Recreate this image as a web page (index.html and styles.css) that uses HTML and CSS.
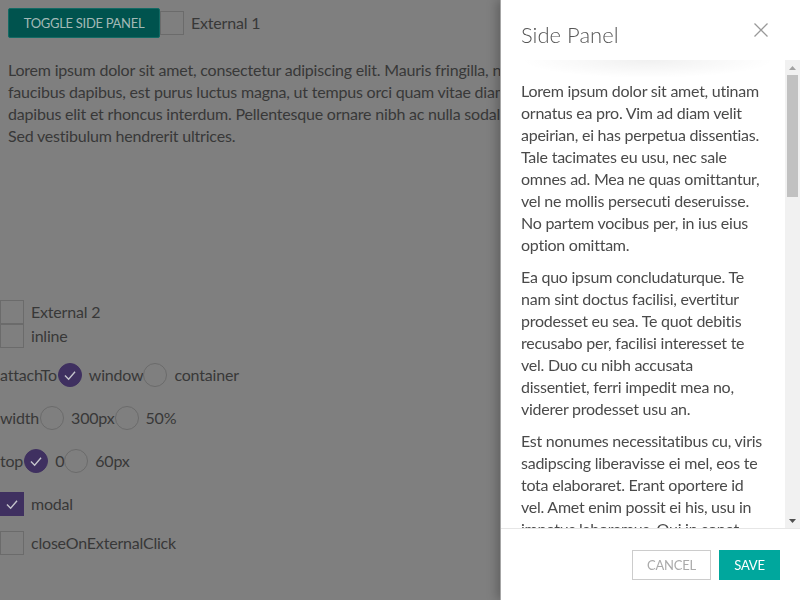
FILE: index.html
```html
<!DOCTYPE html>
<html lang="en">
<head>
<meta charset="utf-8">
<title>Side Panel demo</title>
<link rel="stylesheet" href="styles.css">
</head>
<body>
<div class="page">
  <div class="demo">
    <div class="toolbar">
      <button class="btn-toggle">Toggle Side Panel</button>
      <label class="check"><span class="box"></span><span class="lbl">External 1</span></label>
    </div>
    <p class="intro">Lorem ipsum dolor sit amet, consectetur adipiscing elit. Mauris fringilla, nec ornare tortor<br>faucibus dapibus, est purus luctus magna, ut tempus orci quam vitae diam. Nunc porta<br>dapibus elit et rhoncus interdum. Pellentesque ornare nibh ac nulla sodales, id<br>Sed vestibulum hendrerit ultrices.</p>
  </div>
  <div class="controls">
    <label class="check"><span class="box"></span><span class="lbl">External 2</span></label>
    <label class="check"><span class="box"></span><span class="lbl">inline</span></label>
    <div class="radio-row r-first">
      <span class="name">attachTo</span>
      <label class="radio"><span class="dot on"><svg viewBox="0 0 24 24"><path d="M6.5 12.5 L10.5 16.5 L17.5 8.5"/></svg></span><span class="lbl">window</span></label>
      <label class="radio"><span class="dot"></span><span class="lbl">container</span></label>
    </div>
    <div class="radio-row">
      <span class="name">width</span>
      <label class="radio"><span class="dot"></span><span class="lbl">300px</span></label>
      <label class="radio"><span class="dot"></span><span class="lbl">50%</span></label>
    </div>
    <div class="radio-row">
      <span class="name">top</span>
      <label class="radio"><span class="dot on"><svg viewBox="0 0 24 24"><path d="M6.5 12.5 L10.5 16.5 L17.5 8.5"/></svg></span><span class="lbl">0</span></label>
      <label class="radio"><span class="dot"></span><span class="lbl">60px</span></label>
    </div>
    <label class="check c-modal"><span class="box on"><svg viewBox="0 0 24 24"><path d="M6.5 12.5 L10.5 16.5 L17.5 8.5"/></svg></span><span class="lbl">modal</span></label>
    <label class="check c-last"><span class="box"></span><span class="lbl">closeOnExternalClick</span></label>
  </div>
</div>

<aside class="panel">
  <header class="panel-head">
    <h2 class="panel-title">Side Panel</h2>
    <button class="close" aria-label="Close"><svg viewBox="0 0 14 14"><path d="M0.5 0.5 L13.5 13.5 M13.5 0.5 L0.5 13.5"/></svg></button>
  </header>
  <div class="panel-main">
    <div class="panel-body">
      <p>Lorem ipsum dolor sit amet, utinam ornatus ea pro. Vim ad diam velit apeirian, ei has perpetua dissentias. Tale tacimates eu usu, nec sale omnes ad. Mea ne quas omittantur, vel ne mollis persecuti deseruisse. No partem vocibus per, in ius eius option omittam.</p>
      <p>Ea quo ipsum concludaturque. Te nam sint doctus facilisi, evertitur prodesset eu sea. Te quot debitis recusabo per, facilisi interesset te vel. Duo cu nibh accusata dissentiet, ferri impedit mea no, viderer prodesset usu an.</p>
      <p>Est nonumes necessitatibus cu, viris sadipscing liberavisse ei mel, eos te tota elaboraret. Erant oportere id vel. Amet enim possit ei his, usu in impetus laboramus. Qui in sonet assueverit, sea ad novum scaevola. Quo ut nisl dicam, mel eu iudico nostro.</p>
      <p>Cu eos option constituam, et pro alterum salutatus. Eos id purto utamur accusamus, vis ad dicam tibique. Sea in eirmod definiebas, an elit deterruisset per.</p>
    </div>
    <div class="scrollbar" aria-hidden="true">
      <div class="sb-btn sb-up"><svg viewBox="0 0 7 4"><path d="M0 4 L3.5 0 L7 4 Z"/></svg></div>
      <div class="sb-track"><div class="sb-thumb"></div></div>
      <div class="sb-btn sb-down"><svg viewBox="0 0 7 4"><path d="M0 0 L7 0 L3.5 4 Z"/></svg></div>
    </div>
  </div>
  <footer class="panel-foot">
    <button class="btn-cancel">Cancel</button>
    <button class="btn-save">Save</button>
  </footer>
</aside>
</body>
</html>
```

FILE: styles.css
```css
* { box-sizing: border-box; }

html, body {
  margin: 0;
  height: 100%;
}

body {
  background: #7f7f7f;
  font-family: "Lato", "Liberation Sans", sans-serif;
  font-size: 16px;
  line-height: 22px;
  letter-spacing: -0.2px;
  color: #383838;
  overflow: hidden;
}

.demo {
  height: 300px;
  padding: 8px;
}

.toolbar {
  display: flex;
  align-items: center;
  height: 30px;
}

.btn-toggle {
  height: 30px;
  width: 152px;
  padding: 0;
  border: 1px solid #136a64;
  border-radius: 2px;
  background: #00534e;
  color: #a3b9b6;
  font-family: inherit;
  font-size: 13px;
  letter-spacing: -0.3px;
  text-transform: uppercase;
}

.intro {
  margin: 21px 0 0;
  width: 784px;
  white-space: nowrap;
}

.check {
  display: flex;
  align-items: center;
  height: 24px;
}

.box {
  width: 24px;
  height: 24px;
  flex: none;
  border: 1px solid #6b6b6b;
}

.box.on {
  background: #3f3060;
  border-color: #3f3060;
}

.lbl {
  margin-left: 7px;
}

.controls {
  display: flex;
  flex-direction: column;
  align-items: flex-start;
}

.radio-row {
  display: flex;
  align-items: center;
  height: 24px;
  margin-top: 19px;
}

.radio-row.r-first { margin-top: 15px; }

.name {
  padding-right: 1px;
}

.radio {
  display: flex;
  align-items: center;
}

.dot {
  width: 24px;
  height: 24px;
  flex: none;
  border: 1px solid #6b6b6b;
  border-radius: 50%;
}

.dot.on {
  background: #3f3060;
  border-color: #3f3060;
}

.dot svg, .box svg {
  display: block;
  width: 22px;
  height: 22px;
  fill: none;
  stroke: #c4c4cc;
  stroke-width: 1.5;
}

.c-modal { margin-top: 19px; }
.c-last { margin-top: 15px; }

/* side panel */
.panel {
  position: fixed;
  top: 0;
  right: 0;
  bottom: 0;
  width: 300px;
  background: #fff;
  border-left: 1px solid #a6a6a6;
  box-shadow: -3px 0 10px rgba(0, 0, 0, 0.25);
  display: flex;
  flex-direction: column;
  letter-spacing: normal;
}

.panel-head {
  position: relative;
  height: 60px;
  flex: none;
  display: flex;
  align-items: center;
  justify-content: space-between;
  padding: 0 32px 0 20px;
  z-index: 1;
}

.panel-head::after {
  content: "";
  position: absolute;
  left: 20px;
  right: 25px;
  top: 100%;
  height: 18px;
  background: radial-gradient(ellipse 50% 100% at 50% 0, rgba(0, 0, 0, 0.06), rgba(0, 0, 0, 0) 100%);
  pointer-events: none;
}

.panel-title {
  margin: 0;
  font-size: 22px;
  font-weight: 300;
  color: #555;
  padding-top: 10px;
}

.close {
  border: 0;
  background: none;
  padding: 0;
  width: 14px;
  height: 14px;
}

.close svg {
  display: block;
  width: 14px;
  height: 14px;
  stroke: #999;
  stroke-width: 1.3;
}

.panel-main {
  flex: 1;
  min-height: 0;
  display: flex;
}

.panel-body {
  flex: 1;
  min-width: 0;
  overflow: hidden;
  padding: 20px 20px 0 20px;
  color: #4a4a4a;
  letter-spacing: -0.25px;
}

.panel-body p {
  margin: 0 0 10px;
}

.scrollbar {
  width: 15px;
  flex: none;
  background: #f1f1f1;
  display: flex;
  flex-direction: column;
}

.sb-btn {
  height: 15px;
  flex: none;
  display: flex;
  align-items: center;
  justify-content: center;
}

.sb-btn svg {
  display: block;
  width: 7px;
  height: 4px;
}

.sb-up svg { fill: #a3a3a3; }
.sb-down svg { fill: #505050; }

.sb-track {
  flex: 1;
  padding: 0 2px;
}

.sb-thumb {
  height: 122px;
  background: #c1c1c1;
}

.panel-foot {
  flex: none;
  height: 72px;
  border-top: 1px solid #e6e6e6;
  display: flex;
  justify-content: flex-end;
  align-items: flex-start;
  gap: 8px;
  padding: 21px 20px 0;
}

.btn-cancel, .btn-save {
  height: 30px;
  padding: 0;
  font-family: inherit;
  font-size: 13px;
  letter-spacing: -0.2px;
  text-transform: uppercase;
}

.btn-cancel {
  background: #fff;
  border: 1px solid #ccc;
  color: #aaa;
  width: 79px;
}

.btn-save {
  background: #00a79d;
  border: 1px solid #00a79d;
  color: #fff;
  width: 61px;
}
```
